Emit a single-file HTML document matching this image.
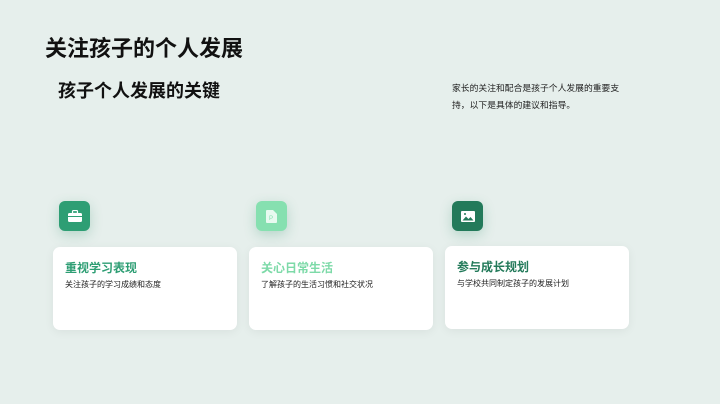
<!DOCTYPE html>
<html><head><meta charset="utf-8"><style>
*{margin:0;padding:0;box-sizing:border-box}
body{width:720px;height:404px;background:#e6efec;font-family:"Liberation Sans","Noto Sans CJK SC",sans-serif;position:relative;overflow:hidden;color:#111}
.t1{position:absolute;left:45px;top:31px;font-size:22px;font-weight:bold}
.t2{position:absolute;left:58px;top:77px;font-size:18px;font-weight:bold}
.intro{position:absolute;left:452px;top:80px;width:180px;font-size:8.8px;line-height:17px;color:#222}
.ic{position:absolute;top:201px;width:31px;height:30px;border-radius:6px;box-shadow:0 4px 12px rgba(40,140,100,.25);display:flex;align-items:center;justify-content:center}
.card{position:absolute;top:247px;width:184px;height:83px;background:#fff;border-radius:7px;box-shadow:0 2px 10px rgba(0,0,0,.06);padding:12px 12px}
.card h3{font-size:12px;font-weight:bold;margin-bottom:3px}
.card p{font-size:8px;color:#222}
</style></head><body>
<div class="t1">关注孩子的个人发展</div>
<div class="t2">孩子个人发展的关键</div>
<div class="intro">家长的关注和配合是孩子个人发展的重要支持，以下是具体的建议和指导。</div>

<div class="ic" style="left:59px;background:#2e9e74"><svg width="14" height="12" viewBox="0 0 14 12"><rect x="0" y="3" width="14" height="9" rx="1.5" fill="#fff"/><rect x="4.5" y="0.5" width="5" height="3" rx="1" fill="none" stroke="#fff" stroke-width="1.2"/><rect x="0" y="6" width="14" height="1" fill="#2e9e74"/></svg></div>
<div class="ic" style="left:256px;background:#86e0b0"><svg width="11" height="13" viewBox="0 0 11 13"><path d="M0 1a1 1 0 011-1h6l4 4v8a1 1 0 01-1 1H1a1 1 0 01-1-1z" fill="#e8faf0"/><text x="3" y="10" font-size="6" fill="#86e0b0" font-family="Liberation Sans">P</text></svg></div>
<div class="ic" style="left:452px;background:#237a5a"><svg width="14" height="11" viewBox="0 0 14 11"><rect x="0" y="0" width="14" height="11" rx="1" fill="#fff"/><path d="M1.5 9.5l3.5-4 2.5 2.5 2-2 3 3.5z" fill="#237a5a"/><circle cx="4" cy="3" r="1" fill="#237a5a"/></svg></div>

<div class="card" style="left:53px"><h3 style="color:#2e9e74">重视学习表现</h3><p>关注孩子的学习成绩和态度</p></div>
<div class="card" style="left:249px"><h3 style="color:#7ddaa8">关心日常生活</h3><p>了解孩子的生活习惯和社交状况</p></div>
<div class="card" style="left:445px;top:246px"><h3 style="color:#237a5a">参与成长规划</h3><p>与学校共同制定孩子的发展计划</p></div>
</body></html>
